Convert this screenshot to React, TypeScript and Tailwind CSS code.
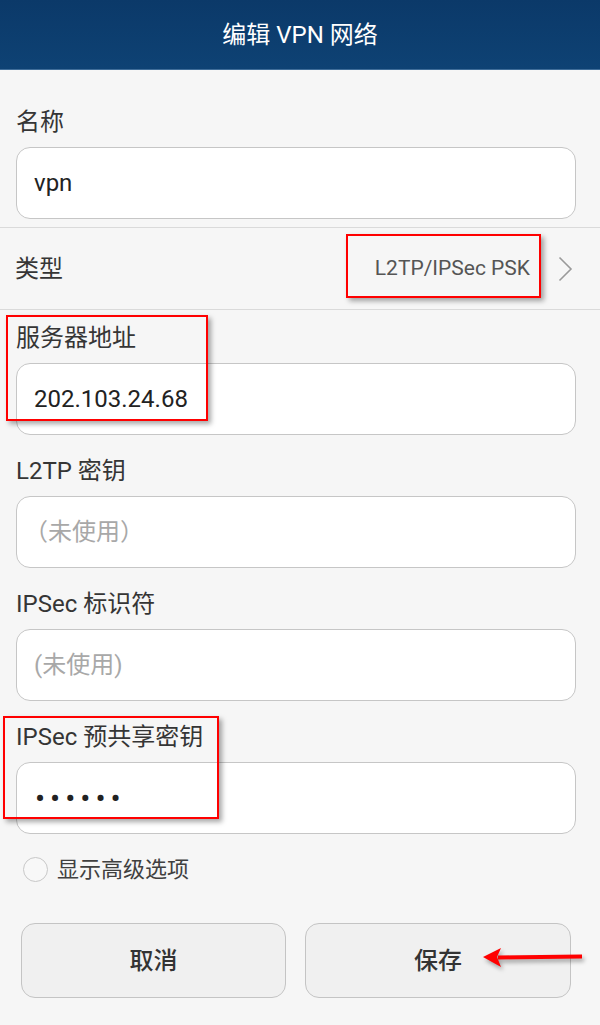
import React from "react";

const font = { fontFamily: "Roboto, 'Noto Sans CJK SC', 'Noto Sans', sans-serif" };

function Field({ label, children, first }: { label: string; children: React.ReactNode; first?: boolean }) {
  return (
    <div className={first ? "" : "mt-[20px]"}>
      <div className="h-[32px] leading-[32px] text-[24px] text-[#353535]">{label}</div>
      <div className="mt-[9px] h-[72px] bg-white border border-[#c6c6c6] rounded-[14px] flex items-center pl-[17px] text-[24px] text-[#222]">
        {children}
      </div>
    </div>
  );
}

export default function App() {
  return (
    <div style={font} className="relative w-full h-[1025px] bg-[#f6f6f6] overflow-hidden">
      <div className="h-[70px] bg-gradient-to-b from-[#0b3969] to-[#0e4274] border-b border-[#3f6d99] flex items-center justify-center text-white text-[24px]">
        编辑 VPN 网络
      </div>

      <div className="pl-[16px] pr-[24px] pt-[36px]">
        <Field label="名称" first>
          vpn
        </Field>
      </div>

      <div className="mt-[8px] border-t border-[#dadada]" />
      <div className="h-[81px] flex items-center justify-between pl-[15px] pr-[27px]">
        <span className="text-[24px] text-[#353535]">类型</span>
        <div className="flex items-center">
          <span className="text-[21px] text-[#555]">L2TP/IPSec PSK</span>
          <svg className="ml-[28px]" width="15" height="26" viewBox="0 0 15 26" fill="none">
            <path d="M1.5 1.5 L13 13 L1.5 24.5" stroke="#9a9a9a" strokeWidth="1.6" />
          </svg>
        </div>
      </div>
      <div className="border-t border-[#dadada]" />

      <div className="pl-[16px] pr-[24px] pt-[12px]">
        <Field label="服务器地址" first>
          202.103.24.68
        </Field>
        <Field label="L2TP 密钥">
          <span className="text-[#a8a8a8] -ml-[10px]">（未使用）</span>
        </Field>
        <Field label="IPSec 标识符">
          <span className="text-[#a8a8a8]">(未使用)</span>
        </Field>
        <Field label="IPSec 预共享密钥">
          <span className="text-[#222] text-[30px] tracking-[5px] pl-[1px]">••••••</span>
        </Field>

        <div className="mt-[23px] h-[24px] flex items-center pl-[7px]">
          <div className="w-[25px] h-[25px] rounded-full border border-[#c8c8c8] bg-[#f8f8f8]" />
          <span className="ml-[9px] text-[22px] text-[#404040]">显示高级选项</span>
        </div>
      </div>

      <div className="mt-[42px] ml-[21px] flex gap-[19px]">
        <button className="w-[265px] h-[75px] rounded-[14px] border border-[#c4c4c4] bg-[#f0f0f0] text-[24px] font-medium text-[#333]">
          取消
        </button>
        <button className="w-[266px] h-[75px] rounded-[14px] border border-[#c4c4c4] bg-[#f0f0f0] text-[24px] font-medium text-[#333]">
          保存
        </button>
      </div>

      {/* annotation overlays */}
      <div className="absolute left-[346px] top-[234px] w-[195px] h-[64px] border-2 border-[#ff0000] shadow-[3px_3px_5px_rgba(0,0,0,0.35)]" />
      <div className="absolute left-[6px] top-[315px] w-[202px] h-[106px] border-2 border-[#ff0000] shadow-[3px_3px_5px_rgba(0,0,0,0.35)]" />
      <div className="absolute left-[3px] top-[716px] w-[216px] h-[103px] border-2 border-[#ff0000] shadow-[3px_3px_5px_rgba(0,0,0,0.35)]" />
      <svg
        className="absolute left-[480px] top-[940px]"
        width="110"
        height="40"
        viewBox="0 0 110 40"
        style={{ filter: "drop-shadow(2px 3px 2px rgba(0,0,0,0.35))" }}
      >
        <path d="M18 15.5 L102 14.5 L102 18.5 L18 19.5 Z" fill="#ff0000" />
        <path d="M3 17 L21 8 L17 17 L21 27 Z" fill="#ff0000" />
      </svg>
    </div>
  );
}
